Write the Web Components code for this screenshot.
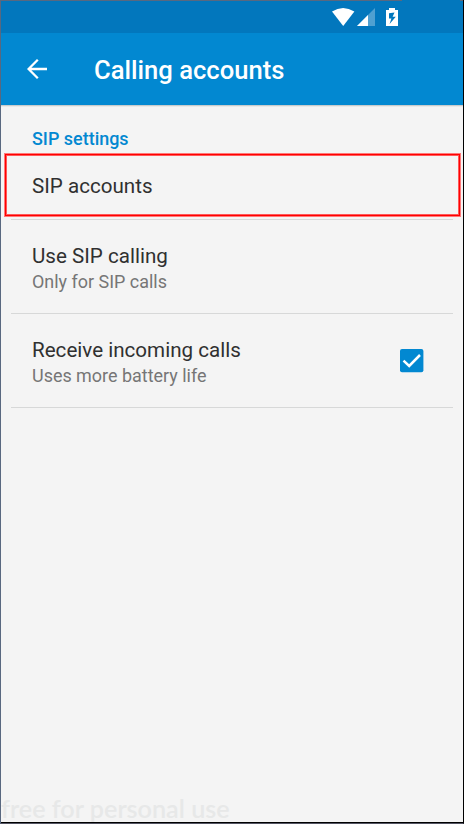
<!DOCTYPE html>
<html lang="en">
<head>
<meta charset="utf-8">
<title>Calling accounts</title>
<style>
html,body{margin:0;height:824px;overflow:hidden;font-family:Roboto,"Liberation Sans",sans-serif}
</style>
</head>
<body>
<phone-screen>
  <status-bar></status-bar>
  <app-bar>Calling accounts</app-bar>
  <section-title>SIP settings</section-title>
  <setting-row class="first" highlighted>SIP accounts</setting-row>
  <setting-row>Use SIP calling<span slot="summary">Only for SIP calls</span></setting-row>
  <setting-row>Receive incoming calls<span slot="summary">Uses more battery life</span><check-box slot="control"></check-box></setting-row>
  <water-mark>free for personal use</water-mark>
</phone-screen>
<script>
function define(name, markup) {
  const template = document.createElement('template');
  template.innerHTML = markup;
  customElements.define(name, class extends HTMLElement {
    constructor() {
      super();
      this.attachShadow({mode: 'open'}).append(template.content.cloneNode(true));
    }
  });
}

define('phone-screen', `<style>
:host{display:flex;flex-direction:column;box-sizing:border-box;width:464px;height:824px;background:#f4f4f4;
border-left:1px solid #596880;border-right:1px solid #000;border-bottom:1px solid #545563;box-shadow:inset 0 -1px #000}
</style><slot></slot>`);

define('status-bar', `<style>
:host{display:block;height:33px;flex:none;background:linear-gradient(90deg,#596880 401px,#0277bd 401px,#0277bd 459px,#596880 459px) 0 0/100% 1px no-repeat #0277bd}
svg{display:block;margin-left:331px}
</style>
<svg width="68" height="33">
<path fill="#fff" d="M0 11.6Q11 4.4 22.4 11.6L11.2 26Z"/>
<path fill="#4fa0d1" d="M43 8V26H25Z"/><path fill="#fff" d="M36 15V26H25Z"/>
<path fill="#fff" d="M54 10h3V8h6v2h3v16H54z"/>
<path fill="#0277bd" d="M62.5 12.5 57 13.2V18.4h2.4L57.6 24 63.8 16.8H60.6z"/>
</svg>`);

define('app-bar', `<style>
:host{display:flex;align-items:center;height:72px;flex:none;background:#0288d1;color:#fff;box-shadow:0 1px #c9cccd,0 2px #e8e9e9;
font-size:25.6px;font-weight:500;line-height:30px;white-space:nowrap}
svg{margin:0 47px 0 26px;flex:none}
span{padding-top:1px}
</style>
<svg width="20" height="22" fill="none" stroke="#fff" stroke-width="2.3"><path d="M20 11H1.6M10.8 1.8 1.6 11l9.2 9.2"/></svg>
<span><slot></slot></span>`);

define('section-title', `<style>
:host{display:block;height:20px;flex:none;padding:24px 0 5px 31px;color:#0288d1;font-size:17.95px;font-weight:500;line-height:20px}
</style><slot></slot>`);

define('setting-row', `<style>
:host{display:flex;position:relative;align-items:center;justify-content:space-between;box-sizing:border-box;height:94px;flex:none;margin:0 10px;padding:0 29px 0 21px;border-bottom:1px solid #d7d8d8;color:#303030;font-size:20.6px;line-height:24px;white-space:nowrap}
:host(.first){height:66px}
:host([highlighted])::before{content:"";position:absolute;left:-6px;right:-7px;top:0;bottom:3px;box-sizing:border-box;border:1px solid #f00;box-shadow:0 0 0 1px #ff7878,inset 0 0 0 1px #ff5858}
.text{display:flex;flex-direction:column;padding-top:6px}
:host(.first) .text{padding:0 0 2px}
::slotted([slot=summary]){color:#767676;font-size:17.95px;line-height:28px}
</style><div class="text"><div><slot></slot></div><slot name="summary"></slot></div><slot name="control"></slot>`);

define('check-box', `<style>
:host{display:block;width:24px;height:24px}svg{display:block}
</style><svg width="24" height="24"><rect width="23.4" height="23.3" rx="2" fill="#0288d1"/><path d="M3.5 11.7 9.2 17 20 6" fill="none" stroke="#fff" stroke-width="2.5"/></svg>`);

define('water-mark', `<style>
:host{display:block;height:28px;margin:auto 0 1px;overflow:hidden;color:#e7e8e8;font:600 25.2px/28px Lato,"Open Sans",sans-serif;white-space:nowrap}
</style><slot></slot>`);
</script>
</body>
</html>
